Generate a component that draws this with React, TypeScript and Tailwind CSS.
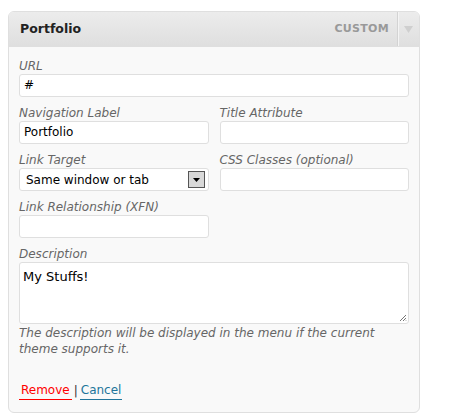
import React from "react";

const font = { fontFamily: '"DejaVu Sans", Verdana, sans-serif' };

function Label({ children }: { children: React.ReactNode }) {
  return (
    <div className="flex h-[17px] items-end text-[12px] leading-[15px] italic text-[#666]">{children}</div>
  );
}

function Input({ value = "" }: { value?: string }) {
  return (
    <div className="h-[23px] rounded-[3px] border border-[#dfdfdf] bg-white px-[4px] text-[12px] leading-[21px] text-black">
      {value}
    </div>
  );
}

export default function App() {
  return (
    <div className="h-[416px] w-[453px] bg-white pt-[11px] pl-[8px]" style={font}>
      <div className="w-[412px] overflow-hidden rounded-[6px] border border-[#dfdfdf] bg-[#f9f9f9]">
        <div className="flex h-[35px] items-center border-b border-[#dfdfdf] bg-gradient-to-b from-[#ececec] to-[#dfdfdf]">
          <div className="flex-1 pl-[11px] pt-[1px] text-[12.5px] font-bold text-[#222]">Portfolio</div>
          <div className="pr-[8px] text-[11px] font-bold tracking-[0.3px] text-[#999]">CUSTOM</div>
          <div className="flex h-full w-[22px] items-center justify-center border-l border-[#d3d3d3] shadow-[inset_1px_0_0_#f4f4f4]">
            <svg width="9" height="7" viewBox="0 0 9 7">
              <path d="M0 0 L9 0 L4.5 7 Z" fill="#cfcfcf" />
            </svg>
          </div>
        </div>
        <div className="pt-[10px] pr-[10px] pb-[12px] pl-[10px]">
          <div className="mb-[7px]">
            <Label>URL</Label>
            <Input value="#" />
          </div>
          <div className="mb-[7px] grid grid-cols-2 gap-x-[11px]">
            <div>
              <Label>Navigation Label</Label>
              <Input value="Portfolio" />
            </div>
            <div>
              <Label>Title Attribute</Label>
              <Input />
            </div>
          </div>
          <div className="mb-[7px] grid grid-cols-2 gap-x-[11px]">
            <div>
              <Label>Link Target</Label>
              <div className="flex h-[23px] items-center rounded-[3px] border border-[#dfdfdf] bg-white pl-[6px] pr-[3px] text-[12px] text-black">
                <span className="flex-1">Same window or tab</span>
                <div className="flex h-[17px] w-[17px] items-center justify-center border border-[#555] bg-[#d8d8d8]">
                  <svg width="7" height="4" viewBox="0 0 7 4">
                    <path d="M0 0 L7 0 L3.5 4 Z" fill="#000" />
                  </svg>
                </div>
              </div>
            </div>
            <div>
              <Label>CSS Classes (optional)</Label>
              <Input />
            </div>
          </div>
          <div className="mb-[7px] grid grid-cols-2 gap-x-[11px]">
            <div>
              <Label>Link Relationship (XFN)</Label>
              <Input />
            </div>
          </div>
          <div>
            <Label>Description</Label>
            <div className="relative h-[62px] rounded-[3px] border border-[#dfdfdf] bg-white px-[3px] pt-[5px] text-[13px] leading-[18px] text-black">
              My Stuffs!
              <svg className="absolute bottom-[1px] right-[1px]" width="8" height="8" viewBox="0 0 8 8">
                <path d="M7 1 L1 7 M7 4 L4 7 M7 6.5 L6.5 7" stroke="#777" strokeWidth="1" />
              </svg>
            </div>
            <div className="mt-[1px] text-[12px] leading-[16px] italic text-[#666]">
              The description will be displayed in the menu if the current theme supports it.
            </div>
          </div>
          <div className="mt-[25px] flex items-center text-[12px] leading-[16px]">
            <span className="border-b border-[#ff0000] px-[2px] pb-[1px] text-[#ff0000]">Remove</span>
            <span className="px-[2px] text-[#333]">|</span>
            <span className="border-b border-[#21759b] px-[1px] pb-[1px] text-[#21759b]">Cancel</span>
          </div>
        </div>
      </div>
    </div>
  );
}
